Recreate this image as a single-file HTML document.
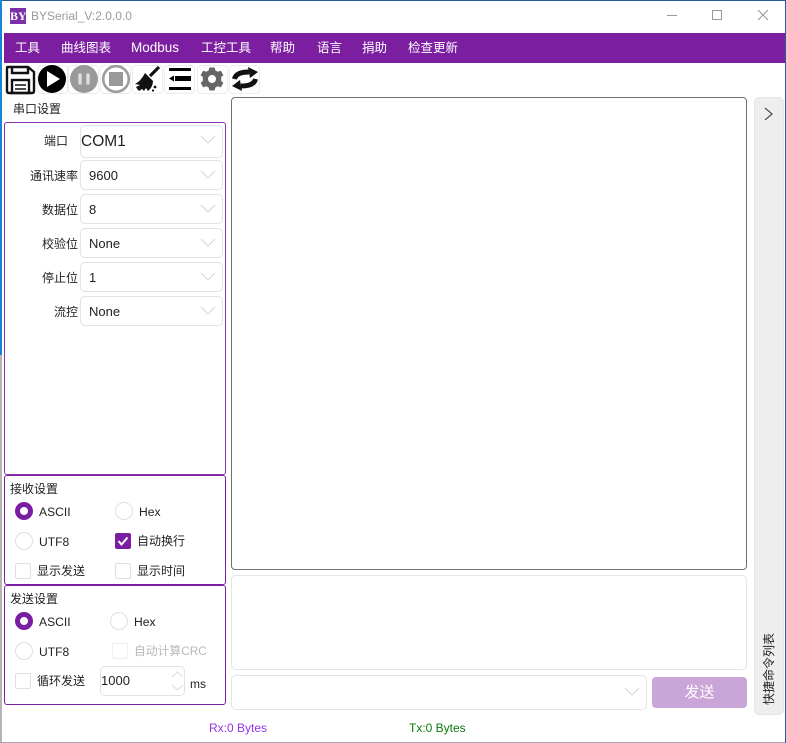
<!DOCTYPE html>
<html><head><meta charset="utf-8"><style>
*{box-sizing:border-box}
html,body{margin:0;padding:0;width:786px;height:743px;overflow:hidden;background:#fff}
body{position:relative;font-family:"Liberation Sans","Noto Sans CJK SC",sans-serif;font-size:12px;color:#222}
.a{position:absolute}
.t{position:absolute;white-space:nowrap;line-height:16px}
.panel{position:absolute;border:1px solid #7b1fa2;border-radius:3px}
.combo{position:absolute;left:80px;width:143px;height:30px;border:1px solid #e2e2e2;border-radius:5px;background:#fff}
.combo span{position:absolute;left:8px;top:7px;line-height:16px;font-size:13px}
.chev{position:absolute;right:6px;top:7px}
.lbl{position:absolute;text-align:right;width:70px;left:8px;line-height:16px;white-space:nowrap}
.radio{position:absolute;width:18px;height:18px;border-radius:50%;border:1px solid #e0e0e0;background:#fff}
.radio.on{border:5px solid #7b1fa2}
.check{position:absolute;width:16px;height:16px;border:1px solid #e0e0e0;border-radius:2px;background:#fff}
.tb{position:absolute;top:65px;width:31px;height:29px;border:1px solid #ececec;border-radius:4px}
.m{position:absolute;top:40px;color:#fff;font-size:12.5px;line-height:16px;white-space:nowrap}
</style></head><body>
<div class="a" style="left:0;top:0;width:786px;height:1px;background:#2b5a9a"></div>
<div class="a" style="left:0;top:0;width:2px;height:355px;background:#1a84d4"></div>
<div class="a" style="left:0;top:355px;width:2px;height:388px;background:#b5b5b5"></div>
<div class="a" style="left:0;top:742px;width:786px;height:1px;background:#a8a8a8"></div>
<div class="a" style="left:785px;top:0;width:1px;height:743px;background:#2b5a9a"></div>

<div class="a" style="left:10px;top:8px;width:16px;height:16px;background:#7b30a8;color:#fff;font:bold 12px/16px 'Liberation Serif',serif;text-align:center">BY</div>
<div class="t" style="left:31px;top:8px;color:#9a9a9a;font-size:12px">BYSerial_V:2.0.0.0</div>
<svg class="a" style="left:660px;top:5px" width="120" height="20" fill="none" stroke="#9a9a9a"><path d="M7 10.5H17"/><rect x="52.5" y="5.5" width="9" height="9"/><path d="M98 5L108 15M108 5L98 15"/></svg>

<div class="a" style="left:4px;top:33px;width:781px;height:30px;background:#7b1fa0"></div>
<div class="m" style="left:15px">工具</div>
<div class="m" style="left:61px">曲线图表</div>
<div class="m" style="left:131px;font-size:13.5px">Modbus</div>
<div class="m" style="left:201px">工控工具</div>
<div class="m" style="left:270px">帮助</div>
<div class="m" style="left:317px">语言</div>
<div class="m" style="left:362px">捐助</div>
<div class="m" style="left:408px">检查更新</div>

<div class="tb" style="left:37px"></div><div class="tb" style="left:68px"></div><div class="tb" style="left:100px"></div><div class="tb" style="left:132px"></div><div class="tb" style="left:164px"></div><div class="tb" style="left:197px"></div><div class="tb" style="left:229px"></div>
<svg class="a" style="left:0;top:62px" width="265" height="34">
<g fill="none" stroke="#111" stroke-width="2.4"><path d="M8 5H28L34 10V29Q34 31 32 31H9Q7 31 7 29V6Q7 5 8 5Z"/><path d="M12 5V11H28V5"/><rect x="12" y="18" width="17" height="13"/></g><path d="M15 23H26M15 27H26" stroke="#111" stroke-width="1.5"/>
<circle cx="52" cy="17" r="14" fill="#000"/><path d="M47 9L60 17L47 25Z" fill="#fff"/>
<circle cx="84" cy="17" r="14" fill="#999"/><path d="M80 11.500V22.500M88 11.500V22.500" stroke="#ddd" stroke-width="3.400"/>
<circle cx="116" cy="17" r="12.8" fill="#fff" stroke="#9d9d9d" stroke-width="2.6"/><rect x="109" y="10" width="14" height="14" fill="#999"/>
<path d="M159 5L150 14" stroke="#111" stroke-width="3.2"/>
<path d="M145 11L153 19Q153 25 148 29L146 26L144 29L142 27L139 29Q137 27 136 25L140 23L135 22Q141 19 145 11Z" fill="#111"/>
<circle cx="155" cy="25" r="1.4" fill="#111"/><circle cx="153" cy="28.500" r="1.100" fill="#111"/>
<path d="M169 6H191V9H169ZM169 25H191V28H169ZM175 14H191V19H175ZM169 16.500L174 13.500V19.500Z" fill="#000"/>
<g transform="translate(212 17)" fill="#666"><path fill-rule="evenodd" d="M-2.600 -11.500H2.600L3.400 -8.500L6 -7.300L8.800 -8.400L11.400 -3.900L9.200 -2L9.200 2L11.400 3.900L8.800 8.400L6 7.300L3.400 8.500L2.600 11.500H-2.600L-3.400 8.500L-6 7.300L-8.800 8.400L-11.400 3.900L-9.200 2L-9.200 -2L-11.400 -3.900L-8.800 -8.400L-6 -7.300L-3.400 -8.500ZM0 -4A4 4 0 1 0 0 4A4 4 0 1 0 0 -4Z"/></g>
<g fill="none" stroke="#111" stroke-width="5"><path d="M234.500 17Q236 10 249 10"/><path d="M255.500 17Q254 24 241 24"/></g>
<path d="M248 5L258 10L250 16ZM242 29L232 24L240 18Z" fill="#111"/>
</svg>

<div class="t" style="left:13px;top:101px">串口设置</div>

<div class="panel" style="left:4px;top:122px;width:222px;height:353px;border-color:#8a35ae"></div>
<div class="lbl" style="top:133px;left:-2px">端口</div>
<div class="lbl" style="top:168px">通讯速率</div>
<div class="lbl" style="top:202px">数据位</div>
<div class="lbl" style="top:236px">校验位</div>
<div class="lbl" style="top:270px">停止位</div>
<div class="lbl" style="top:304px">流控</div>

<div class="combo" style="top:125px;height:33px"><span style="left:0;top:8px;font-size:15.500px">COM1</span><svg class="chev" width="16" height="14" fill="none" stroke="#d8d8d8" stroke-width="1.2"><path d="M1 3L8 10L15 3"/></svg></div>
<div class="combo" style="top:160px"><span>9600</span><svg class="chev" width="16" height="14" fill="none" stroke="#d8d8d8" stroke-width="1.2"><path d="M1 3L8 10L15 3"/></svg></div>
<div class="combo" style="top:194px"><span>8</span><svg class="chev" width="16" height="14" fill="none" stroke="#d8d8d8" stroke-width="1.2"><path d="M1 3L8 10L15 3"/></svg></div>
<div class="combo" style="top:228px"><span>None</span><svg class="chev" width="16" height="14" fill="none" stroke="#d8d8d8" stroke-width="1.2"><path d="M1 3L8 10L15 3"/></svg></div>
<div class="combo" style="top:262px"><span>1</span><svg class="chev" width="16" height="14" fill="none" stroke="#d8d8d8" stroke-width="1.2"><path d="M1 3L8 10L15 3"/></svg></div>
<div class="combo" style="top:296px"><span>None</span><svg class="chev" width="16" height="14" fill="none" stroke="#d8d8d8" stroke-width="1.2"><path d="M1 3L8 10L15 3"/></svg></div>

<div class="panel" style="left:4px;top:475px;width:222px;height:110px"></div>
<div class="t" style="left:10px;top:481px">接收设置</div>
<div class="radio on" style="left:15px;top:502px"></div><div class="t" style="left:39px;top:503.500px;font-size:12.100px">ASCII</div>
<div class="radio" style="left:115px;top:502px"></div><div class="t" style="left:139px;top:503.500px;font-size:12.100px">Hex</div>
<div class="radio" style="left:15px;top:532px"></div><div class="t" style="left:39px;top:533.500px;font-size:12.100px">UTF8</div>
<div class="check" style="left:115px;top:533px;background:#7b1fa2;border-color:#7b1fa2"><svg width="14" height="14" style="display:block" fill="none" stroke="#fff" stroke-width="2"><path d="M2.500 7L5.500 10.500L11.500 3.500"/></svg></div><div class="t" style="left:137px;top:533px">自动换行</div>
<div class="check" style="left:15px;top:563px"></div><div class="t" style="left:37px;top:563px">显示发送</div>
<div class="check" style="left:115px;top:563px"></div><div class="t" style="left:137px;top:563px">显示时间</div>

<div class="panel" style="left:4px;top:585px;width:222px;height:120px"></div>
<div class="t" style="left:10px;top:591px">发送设置</div>
<div class="radio on" style="left:15px;top:612px"></div><div class="t" style="left:39px;top:613.500px;font-size:12.100px">ASCII</div>
<div class="radio" style="left:110px;top:612px"></div><div class="t" style="left:134px;top:613.500px;font-size:12.100px">Hex</div>
<div class="radio" style="left:15px;top:642px"></div><div class="t" style="left:39px;top:643.500px;font-size:12.100px">UTF8</div>
<div class="check" style="left:112px;top:643px;border-color:#efefef"></div><div class="t" style="left:134px;top:643px;color:#b8b8b8;font-size:11.800px">自动计算CRC</div>
<div class="check" style="left:15px;top:673px"></div><div class="t" style="left:37px;top:673px">循环发送</div>
<div class="a" style="left:100px;top:666px;width:85px;height:30px;border:1px solid #e2e2e2;border-radius:5px"></div>
<div class="t" style="left:101px;top:673px;font-size:13px">1000</div>
<svg class="a" style="left:171px;top:669px" width="13" height="24" fill="none" stroke="#dcdcdc"><path d="M1 8L6.500 3L12 8M1 16L6.500 21L12 16"/></svg>
<div class="t" style="left:190px;top:676px">ms</div>

<div class="a" style="left:231px;top:97px;width:516px;height:473px;border:1px solid #707070;border-radius:4px"></div>
<div class="a" style="left:231px;top:575px;width:516px;height:95px;border:1px solid #e4e4e4;border-radius:5px"></div>
<div class="a" style="left:231px;top:675px;width:416px;height:35px;border:1px solid #e4e4e4;border-radius:5px"></div>
<svg class="a" style="left:623px;top:685px" width="18" height="14" fill="none" stroke="#d8d8d8" stroke-width="1.2"><path d="M2 3L9 10L16 3"/></svg>
<div class="a" style="left:652px;top:677px;width:95px;height:31px;background:#caa5d8;border-radius:4px;color:#fff;font-size:15px;line-height:31px;text-align:center">发送</div>

<div class="a" style="left:754px;top:97px;width:30px;height:618px;background:#eeeeee;border:1px solid #e6e6e6;border-radius:5px"></div>
<svg class="a" style="left:762px;top:105px" width="14" height="18" fill="none" stroke="#333" stroke-width="1.1"><path d="M3 3L10 9L3 15"/></svg>
<div class="t" style="left:769px;top:669px;transform:translate(-50%,-50%) rotate(-90deg)">快捷命令列表</div>

<div class="t" style="left:209px;top:720px;color:#9333ea">Rx:0 Bytes</div>
<div class="t" style="left:409px;top:720px;color:#0a7a0a">Tx:0 Bytes</div>
</body></html>
